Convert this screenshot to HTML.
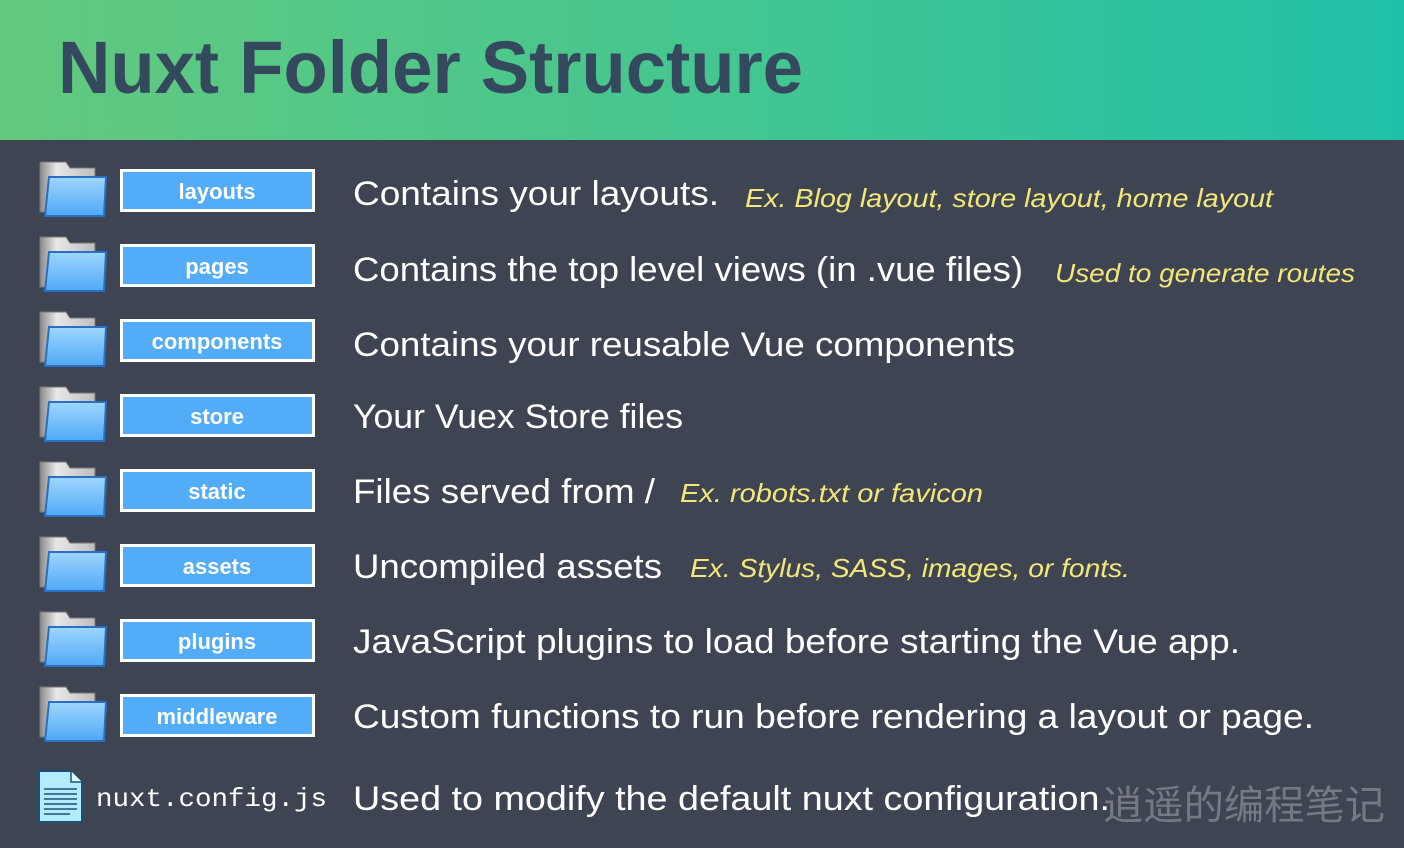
<!DOCTYPE html>
<html><head><meta charset="utf-8"><style>
html,body{margin:0;padding:0;background:#3e4451;}
svg{display:block}
</style></head><body>
<svg width="1404" height="848" viewBox="0 0 1404 848" xmlns="http://www.w3.org/2000/svg">
<defs>
<linearGradient id="hg" x1="0" x2="1" y1="0" y2="0">
<stop offset="0" stop-color="#63c97e"/><stop offset="0.5" stop-color="#45c690"/><stop offset="1" stop-color="#20c0a8"/>
</linearGradient>
<linearGradient id="fb" x1="0" x2="0" y1="0" y2="1">
<stop offset="0" stop-color="#9fd6ff"/><stop offset="1" stop-color="#4fa9f5"/>
</linearGradient>
<linearGradient id="gb" x1="0" x2="1" y1="0" y2="0">
<stop offset="0" stop-color="#8a8a8a"/><stop offset="0.3" stop-color="#e8e8e8"/><stop offset="1" stop-color="#bdbdbd"/>
</linearGradient>
<g id="folder">
<path d="M40 162 H66 L70 168 H95 V212 H40 Z" fill="url(#gb)" stroke="#777" stroke-width="1"/>
<path d="M49 177 H106 L104 216 H45 Z" fill="url(#fb)" stroke="#2a6fc4" stroke-width="2"/>
</g>
<g id="btn">
<rect x="120" y="169" width="195" height="43" fill="#ffffff"/>
<rect x="123" y="172" width="189" height="37" fill="#52acf7"/>
</g>
</defs>
<rect width="1404" height="140" fill="url(#hg)"/>
<text x="58" y="93" font-family="Liberation Sans, sans-serif" font-weight="bold" font-size="74" fill="#35495e" textLength="745" lengthAdjust="spacingAndGlyphs">Nuxt Folder Structure</text>

<g font-family="Liberation Sans, sans-serif">
<use href="#folder"/><use href="#btn"/>
<use href="#folder" y="75"/><use href="#btn" y="75"/>
<use href="#folder" y="150"/><use href="#btn" y="150"/>
<use href="#folder" y="225"/><use href="#btn" y="225"/>
<use href="#folder" y="300"/><use href="#btn" y="300"/>
<use href="#folder" y="375"/><use href="#btn" y="375"/>
<use href="#folder" y="450"/><use href="#btn" y="450"/>
<use href="#folder" y="525"/><use href="#btn" y="525"/>
<g fill="#fff" font-weight="bold" font-size="22" text-anchor="middle">
<text x="217" y="199">layouts</text>
<text x="217" y="274">pages</text>
<text x="217" y="349">components</text>
<text x="217" y="424">store</text>
<text x="217" y="499">static</text>
<text x="217" y="574">assets</text>
<text x="217" y="649">plugins</text>
<text x="217" y="724">middleware</text>
</g>
<g fill="#fff" font-size="34">
<text x="353" y="205" textLength="366" lengthAdjust="spacingAndGlyphs">Contains your layouts.</text>
<text x="353" y="281" textLength="670" lengthAdjust="spacingAndGlyphs">Contains the top level views (in .vue files)</text>
<text x="353" y="356" textLength="662" lengthAdjust="spacingAndGlyphs">Contains your reusable Vue components</text>
<text x="353" y="428" textLength="330" lengthAdjust="spacingAndGlyphs">Your Vuex Store files</text>
<text x="353" y="503" textLength="302" lengthAdjust="spacingAndGlyphs">Files served from /</text>
<text x="353" y="578" textLength="309" lengthAdjust="spacingAndGlyphs">Uncompiled assets</text>
<text x="353" y="653" textLength="887" lengthAdjust="spacingAndGlyphs">JavaScript plugins to load before starting the Vue app.</text>
<text x="353" y="728" textLength="961" lengthAdjust="spacingAndGlyphs">Custom functions to run before rendering a layout or page.</text>
<text x="353" y="810" textLength="757" lengthAdjust="spacingAndGlyphs">Used to modify the default nuxt configuration.</text>
</g>
<g fill="#f3e77a" font-size="26" font-style="italic">
<text x="745" y="207" textLength="528" lengthAdjust="spacingAndGlyphs">Ex. Blog layout, store layout, home layout</text>
<text x="1055" y="282" textLength="300" lengthAdjust="spacingAndGlyphs">Used to generate routes</text>
<text x="680" y="502" textLength="303" lengthAdjust="spacingAndGlyphs">Ex. robots.txt or favicon</text>
<text x="690" y="577" textLength="440" lengthAdjust="spacingAndGlyphs">Ex. Stylus, SASS, images, or fonts.</text>
</g>
</g>
<!-- file icon -->
<path d="M39 771 H71 L82 782 V822 H39 Z" fill="#b3ecff" stroke="#1d4e7a" stroke-width="2"/>
<path d="M71 771 V782 H82" fill="#e0f7ff" stroke="#1d4e7a" stroke-width="1.5"/>
<g stroke="#1d4e7a" stroke-width="1.6">
<line x1="44" y1="789" x2="77" y2="789"/><line x1="44" y1="794" x2="77" y2="794"/>
<line x1="44" y1="799" x2="77" y2="799"/><line x1="44" y1="804" x2="77" y2="804"/>
<line x1="44" y1="809" x2="77" y2="809"/><line x1="44" y1="814" x2="70" y2="814"/>
</g>
<text x="96" y="806" font-family="Liberation Mono, monospace" font-size="26" fill="#fff" textLength="231" lengthAdjust="spacingAndGlyphs">nuxt.config.js</text>
<text x="1103" y="819" font-family="Liberation Sans, 'Noto Sans CJK SC', sans-serif" font-size="40" fill="#747983" textLength="282" lengthAdjust="spacingAndGlyphs">逍遥的编程笔记</text>
</svg>
</body></html>
